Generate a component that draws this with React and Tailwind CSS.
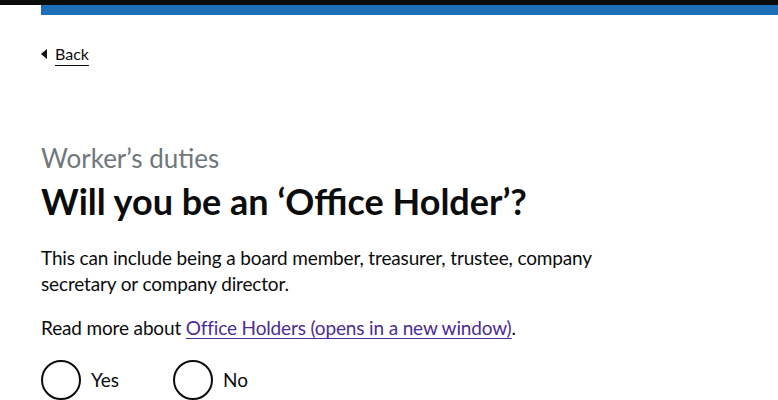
const App = () => {
  return (
    <div className="min-h-screen bg-white text-[#0b0c0c] font-['Lato',Arial,sans-serif]">
      <div className="h-[5px] bg-[#0b0c0c]" />
      <div className="pl-[41px]">
        <div className="h-[10px] bg-[#1d70b8]" />
        <a
          href="#"
          className="mt-[29px] inline-flex items-center gap-[8px] text-[16px] leading-[20px] text-[#0b0c0c] underline underline-offset-[5px] decoration-1"
        >
          <span className="inline-block w-0 h-0 border-y-[5px] border-y-transparent border-r-[6px] border-r-[#0b0c0c]" />
          <span>Back</span>
        </a>

        <div className="mt-[78px] w-[600px]">
          <span className="block text-[26px] leading-[30px] text-[#6f777b]">Worker’s duties</span>
          <h1 className="mt-[7px] text-[36px] leading-[42px] font-bold">Will you be an ‘Office Holder’?</h1>
          <p className="mt-[23px] text-[19px] leading-[26px] tracking-[-0.15px]">
            This can include being a board member, treasurer, trustee, company secretary or company director.
          </p>
          <p className="mt-[18px] text-[19px] leading-[26px] tracking-[-0.15px]">
            Read more about{" "}
            <a href="#" className="text-[#4c2c92] underline underline-offset-[3px] decoration-1">
              Office Holders (opens in a new window)
            </a>
            .
          </p>
          <div className="mt-[19px] flex gap-[54px]">
            <label className="flex items-center gap-[10px] text-[19px]">
              <span className="w-[40px] h-[40px] rounded-full border-2 border-[#0b0c0c]" />
              Yes
            </label>
            <label className="flex items-center gap-[10px] text-[19px]">
              <span className="w-[40px] h-[40px] rounded-full border-2 border-[#0b0c0c]" />
              No
            </label>
          </div>
        </div>
      </div>
    </div>
  );
};

export default App;
